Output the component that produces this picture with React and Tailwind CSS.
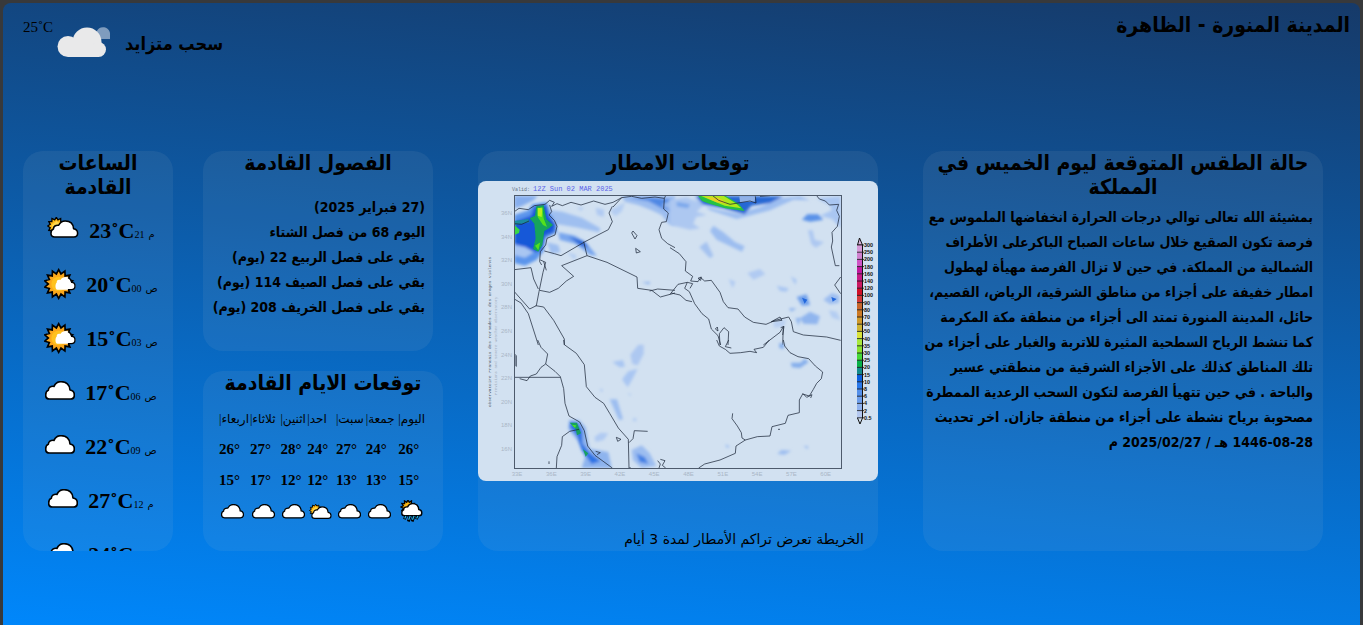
import React from "react";

const CLOUD =
  "M14 54H76C85 54 88 48 88 42C88 34 83 28 75 27C74 12 64 2 48 2C38 2 31 7 27 16C17 15 10 19 10 28C4 30 2 36 2 42C2 50 6 54 14 54Z";

function burst(cx, cy, outer, inner, spikes) {
  const pts = [];
  for (let i = 0; i < spikes * 2; i++) {
    const r = i % 2 ? inner : outer;
    const a = (Math.PI * i) / spikes - Math.PI / 2;
    pts.push(`${(cx + r * Math.cos(a)).toFixed(1)},${(cy + r * Math.sin(a)).toFixed(1)}`);
  }
  return pts.join(" ");
}

function Cloud({ className }) {
  return (
    <svg viewBox="0 0 90 57" className={className} aria-hidden="true">
      <path d={CLOUD} fill="#fff" stroke="#000" strokeWidth="5" strokeLinejoin="round" />
    </svg>
  );
}

function CloudSun({ className }) {
  return (
    <svg viewBox="0 0 96 66" className={className} aria-hidden="true">
      <polygon points={burst(28, 27, 26, 19, 12)} fill="#fdb813" stroke="#000" strokeWidth="4" />
      <path d="M14 24L28 12L42 20L20 44Z" fill="#ffd84a" />
      <path d={CLOUD} transform="translate(10 10) scale(.93)" fill="#fff" stroke="#000" strokeWidth="5" strokeLinejoin="round" />
    </svg>
  );
}

function Sunny({ className }) {
  return (
    <svg viewBox="0 0 96 92" className={className} aria-hidden="true">
      <polygon points={burst(44, 46, 43, 31, 14)} fill="#fba81c" stroke="#000" strokeWidth="5" />
      <circle cx="44" cy="46" r="22" fill="#ffc21f" />
      <path
        d="M40 63H82C91 63 94 58 94 52C94 45 89 41 82 41C81 31 75 25 66 25C58 25 52 28 49 34C41 32 38 36 38 42C33 45 33 63 40 63Z"
        fill="#fff"
      />
      <path d="M72 27C80 30 82 37 83 41C90 41 93 46 93 52C93 58 90 63 82 63H72" fill="none" stroke="#000" strokeWidth="4" />
    </svg>
  );
}

function Rain({ className }) {
  return (
    <svg viewBox="0 0 72 70" className={className} aria-hidden="true">
      <polygon points={burst(25, 22, 22, 15, 12)} fill="#fdb813" stroke="#000" strokeWidth="4" />
      <path d={CLOUD} transform="translate(4 10) scale(.73)" fill="#fff" stroke="#000" strokeWidth="6" />
      <g stroke="#000" strokeWidth="9">
        <path d="M18 50L14 60M32 50L26 67M44 50L38 67M56 50L51 60" />
      </g>
      <g stroke="#24b6e8" strokeWidth="4">
        <path d="M18 50L15 58M32 50L27 62M44 50L39 62M56 50L52 58" />
      </g>
    </svg>
  );
}

const ICONS = { cloud: Cloud, cloudSun: CloudSun, sunny: Sunny, rain: Rain };

const hours = [
  ["cloudSun", 23, "21", "م"],
  ["sunny", 20, "00", "ص"],
  ["sunny", 15, "03", "ص"],
  ["cloud", 17, "06", "ص"],
  ["cloud", 22, "09", "ص"],
  ["cloud", 27, "12", "م"],
  ["cloud", 24, "15", "م"],
];

const days = [
  ["اليوم", 26, 15, "rain"],
  ["جمعة", 24, 13, "cloud"],
  ["سبت", 27, 13, "cloud"],
  ["احد", 24, 12, "cloudSun"],
  ["اثنين", 28, 12, "cloud"],
  ["ثلاثاء", 27, 17, "cloud"],
  ["اربعاء", 26, 15, "cloud"],
];

const seasons = [
  "(27 فبراير 2025)",
  "اليوم 68 من فصل الشتاء",
  "بقي على فصل الربيع 22 (يوم)",
  "بقي على فصل الصيف 114 (يوم)",
  "بقي على فصل الخريف 208 (يوم)",
];

const report = [
  "بمشيئة الله تعالى توالي درجات الحرارة انخفاضها الملموس مع",
  "فرصة تكون الصقيع خلال ساعات الصباح الباكرعلى الأطراف",
  "الشمالية من المملكة. في حين لا تزال الفرصة مهيأة لهطول",
  "امطار خفيفة على أجزاء من مناطق الشرقية، الرياض، القصيم،",
  "حائل، المدينة المنورة تمتد الى أجزاء من منطقة مكة المكرمة",
  "كما تنشط الرياح السطحية المثيرة للاتربة والغبار على أجزاء من",
  "تلك المناطق كذلك على الأجزاء الشرقية من منطقتي عسير",
  "والباحة . في حين تتهيأ الفرصة لتكون السحب الرعدية الممطرة",
  "مصحوبة برياح نشطة على أجزاء من منطقة جازان. اخر تحديث",
];

const scale = [
  ["300", "#d79ad8"], ["250", "#d081cf"], ["200", "#cf55c6"], ["180", "#c2189f"],
  ["160", "#c71c86"], ["140", "#cb1a62"], ["120", "#d01028"], ["100", "#d23a3a"],
  ["90", "#c8662c"], ["80", "#cc7a26"], ["70", "#cf9a2c"], ["60", "#cdb435"],
  ["50", "#d9e23a"], ["40", "#a8e83c"], ["35", "#88e030"], ["30", "#45d838"],
  ["25", "#08b048"], ["20", "#128a8c"], ["15", "#0a5fe0"], ["10", "#2a78ea"],
  ["8", "#5590ea"], ["6", "#6f9fec"], ["4", "#90b2ee"], ["2", "#b4c8f0"], ["0.5", ""],
];

function RainMap() {
  return (
    <svg viewBox="0 0 400 300" className="block w-full rounded-lg bg-[#d2e1f1]" role="img" aria-label="توقعات الامطار">
      <defs>
        <filter id="soft" x="-20%" y="-20%" width="140%" height="140%">
          <feGaussianBlur stdDeviation="4" />
        </filter>
        <filter id="soft2" x="-20%" y="-20%" width="140%" height="140%">
          <feGaussianBlur stdDeviation="2" />
        </filter>
        <clipPath id="frame">
          <rect x="37" y="15" width="326" height="272" />
        </clipPath>
      </defs>

      <g clipPath="url(#frame)">
        {/* north west */}
        <svg x="-3" y="-36" width="200" height="200" viewBox="0 0 600 600" overflow="visible">
          <g filter="url(#soft)">
            <path d="M118 152H188L176 166L140 184L118 190Z" fill="#86aeee" />
            <path d="M118 210L160 196L172 178L215 172L226 205L244 228L246 262L212 280L206 318L184 345L150 362L118 354Z" fill="#5b95ec" />
            <path d="M118 230L168 212L178 186L214 180L222 216L242 236L236 262L210 272L200 312L184 322L160 312L118 296Z" fill="#1658d8" />
            <path d="M118 300L150 306L176 322L150 338L118 330Z" fill="#a9c6f2" />
            <path d="M226 196L262 200L320 218L376 250L372 262L310 248L240 236Z" fill="#9fbff0" />
            <path d="M250 262L300 272L332 292L366 332L346 330L300 296L254 284Z" fill="#78a6ee" />
            <path d="M280 274L324 288L342 308L318 302Z" fill="#2064d8" />
            <path d="M216 292L250 300L256 322L228 326Z" fill="#9fbff0" />
            <path d="M276 322L304 330L300 346Z" fill="#b4cdf2" />
            <path d="M362 188L388 194L386 216L366 210Z" fill="#b0caf2" />
            <path d="M405 196L450 172L440 200L420 214Z" fill="#b4cdf2" />
            <path d="M440 152H600V240L580 236L560 210L530 196L490 180L450 170Z" fill="#9cbdf0" />
            <path d="M460 158L520 168L560 190L596 200L560 180L590 164L540 158Z" fill="#4f88e4" />
            <path d="M500 412L526 412L522 418Z" fill="#7fa8ec" />
            <path d="M306 186L328 188L316 198Z" fill="#b4cdf2" />
          </g>
          <g filter="url(#soft2)">
            <path d="M184 184L206 180L214 222L234 240L222 250L208 258L202 300L190 320L174 312L182 280L178 236L164 220L180 212Z" fill="#12a45c" />
            <path d="M188 190L202 186L206 220L216 246L204 240L188 216Z" fill="#54e01e" />
            <path d="M188 188L202 190L200 216L188 212Z" fill="#b8f01c" />
            <path d="M180 302L196 292L190 316Z" fill="#54e01e" />
            <path d="M118 240L134 254L132 264L118 270Z" fill="#38d844" />
            <path d="M118 228L160 222L164 232L118 240Z" fill="#1c8ca0" />
          </g>
          <g fill="none" stroke="#1b2638" strokeWidth="2.2" strokeLinejoin="round">
            <path d="M118 200L132 190L160 194L178 182L210 178L224 166L238 172L230 184L246 176L262 182L288 172L318 180L356 168L390 178L414 172L440 158L470 154L500 160L540 156L568 160L572 152" />
            <path d="M224 180L230 200L222 210L238 226L246 244L240 270L216 280L212 300L196 320L194 350L200 360" />
            <path d="M118 236L140 238L162 228" />
            <path d="M196 345L212 352L204 382L192 440L184 482L164 492L118 440" />
            <path d="M118 374L168 368L176 402L190 432" />
            <path d="M118 462L138 474L160 506L190 600" />
            <path d="M182 482L206 486L236 526L268 582V600" />
            <path d="M412 184L402 204L412 230L400 254L330 290L258 332L238 326L208 318" />
            <path d="M326 290L336 332L260 362L296 394L274 408L250 430L224 442L194 436" />
            <path d="M336 332L396 352L486 396L488 430L530 436L556 456L600 444" />
            <path d="M440 158L414 186M568 160L566 192L580 204L574 230L560 232L552 254L560 280L578 296L600 308" />
            <path d="M524 438L548 432L600 436M470 264L474 258L486 272L480 282ZM482 310L496 320L484 324ZM206 350L214 376" />
          </g>
        </svg>

        {/* north east */}
        <svg x="192" y="-36" width="220" height="200" viewBox="0 0 660 600" overflow="visible">
          <g filter="url(#soft)">
            <path d="M0 165L50 156L100 180L80 200L110 210L78 216L70 236L90 250L60 254L0 240Z" fill="#adc8f1" />
            <path d="M20 170L60 178L54 190L20 184Z" fill="#7aa7ec" />
            <path d="M66 152L90 180L150 196L216 208L236 196L270 186L330 160L390 154L420 166L370 164L300 196L246 210L200 222L120 196Z" fill="#9cbdf0" />
            <path d="M76 152L98 178L160 190L224 208L244 182L300 174L340 154Z" fill="#2667d4" />
            <path d="M396 224L412 208L444 208L460 224L420 230Z" fill="#5a92e8" />
            <path d="M440 160L512 154V250L486 222L450 212L486 196L478 180Z" fill="#a9c6f2" />
            <path d="M130 242L160 262L196 292L224 304L216 320L178 302L140 284L120 258Z" fill="#9cbdf0" />
            <path d="M88 306L110 290L130 332L120 340Z" fill="#a4c2f0" />
            <path d="M232 384L270 372L286 388L250 404Z" fill="#b0caf2" />
            <path d="M176 402L196 410L188 430Z" fill="#b0caf2" />
            <path d="M414 256L428 256L434 284L462 292L438 308L424 298Z" fill="#adc8f1" />
            <path d="M320 422L356 430L350 440L330 438ZM362 394L380 404L376 420Z" fill="#a9c6f2" />
            <path d="M380 456L410 448L420 480L396 482Z" fill="#6fa0ec" />
            <path d="M460 464L486 444L508 452L506 474L480 478Z" fill="#9cbdf0" />
            <path d="M390 520L420 500L450 514L442 538L400 536ZM376 520L392 518L386 542ZM356 490L380 490L364 500Z" fill="#90b5ee" />
            <path d="M476 496L500 500L512 526L486 518Z" fill="#b4cdf2" />
            <path d="M310 530L350 524L340 545L312 548Z" fill="#b9d0f2" />
          </g>
          <g filter="url(#soft2)">
            <path d="M84 152H166L206 176L224 198L166 190L118 176L96 168Z" fill="#25c044" />
            <path d="M92 152H160L196 174L214 190L164 182L120 164Z" fill="#aee81c" />
            <path d="M104 156L146 158L174 176L140 172Z" fill="#e6ce28" />
            <path d="M396 458L412 464L404 476ZM484 456L500 462L488 470Z" fill="#2467dc" />
            <path d="M208 154H256L254 170L210 172Z" fill="#8fb0e6" />
          </g>
          <g fill="none" stroke="#1b2638" strokeWidth="2.2" strokeLinejoin="round">
            <path d="M128 152L146 166L180 178L240 168L258 174L256 154" />
            <path d="M270 154L300 152M440 152L448 162L466 168L478 180L506 178L500 196L508 214L502 244L486 262L488 288L484 306L496 362L508 362" />
            <path d="M512 396L494 420L512 446" />
            <path d="M0 308L28 326L48 350L46 378L68 394L62 408L84 410L92 398L104 408L124 406L150 442L160 470L174 488L204 492L224 516L250 532L288 538L316 526L356 516L364 530L370 560L400 570L470 576L512 586" />
            <path d="M0 448L24 418L52 412L44 430L58 440L74 476L96 506L116 522L124 552L144 572L152 600M52 412L68 416L60 430M30 450L48 466L66 470M4 444L30 450" />
            <path d="M150 600L148 566L162 548L176 560L174 600M136 552L142 546L144 558ZM84 400L94 396L92 406ZM304 530L330 516L336 526ZM338 600L340 545L330 562L280 600M332 548L342 544L338 570" />
          </g>
        </svg>

        {/* south west */}
        <svg x="-3" y="159" width="200" height="215" viewBox="0 0 600 645" overflow="visible">
          <g filter="url(#soft)">
            <path d="M466 44L490 14L506 14L506 42L488 76L472 72Z" fill="#adc8f1" />
            <path d="M412 66L444 60L450 80L434 82ZM444 114L460 94L488 86L474 114L458 142L442 120Z" fill="#a9c6f2" />
            <path d="M374 146L384 150L380 156ZM404 178L426 178L444 238L432 240Z" fill="#9cbdf0" />
            <path d="M358 292L376 278L400 280L386 300L362 306Z" fill="#b0caf2" />
            <path d="M282 240L312 240L332 262L338 300L344 326L400 336L410 384H320L330 352L306 300L280 268Z" fill="#8eb4ee" />
            <path d="M286 246L310 250L322 272L322 310L344 338L376 364L350 372L320 330L306 288L284 262Z" fill="#2c72e4" />
            <path d="M470 330L500 316L524 340L544 378L500 384L474 360Z" fill="#9cbdf0" />
            <path d="M484 340L510 352L520 372L494 366Z" fill="#4380e4" />
            <path d="M474 234H484V244H474ZM458 160L470 162L464 168Z" fill="#b4cdf2" />
          </g>
          <g filter="url(#soft2)">
            <path d="M284 248L306 248L318 280L306 286L302 266ZM324 328L340 340L332 350Z" fill="#14a060" />
            <path d="M290 254L304 256L300 264Z" fill="#4be02a" />
          </g>
          <g fill="none" stroke="#1b2638" strokeWidth="2.2" strokeLinejoin="round">
            <path d="M188 0L198 22L218 42L212 72L240 94L256 110L266 146L270 190L282 228L314 246L328 272L338 318L360 346L412 384" />
            <path d="M118 112H256M134 116L156 122L166 108L184 102L198 82L212 72" />
            <path d="M266 0L268 14L304 40L328 74L334 140L360 172L386 190L404 220L430 264L460 298L462 384L468 384" />
            <path d="M244 384L246 350L260 316L262 290L284 274L312 268M462 308L474 296L478 272L518 274" />
            <path d="M424 292L438 298L428 304ZM362 334L376 338L366 344M222 364V372M548 362L556 372L552 384M556 358L570 362L562 376L572 384M120 42V78M124 46V80" />
          </g>
        </svg>

        {/* south east */}
        <svg x="192" y="159" width="220" height="215" viewBox="0 0 660 645" overflow="visible">
          <g filter="url(#soft)">
            <path d="M328 8L344 12L340 28L328 24ZM362 68L392 68L404 56L416 66L390 84L366 82Z" fill="#84aeec" />
            <path d="M322 342L334 330L364 332L344 344ZM166 312L180 320L170 324ZM400 318H414V328Z" fill="#9cbdf0" />
          </g>
          <g fill="none" stroke="#1b2638" strokeWidth="2.2" strokeLinejoin="round">
            <path d="M340 0L344 18L360 38L384 50L416 56L436 78L458 96L454 116L440 130L430 148L418 168L398 162L388 180L388 218L354 226L346 250L306 260L300 288L262 290L226 300L198 318L196 340L150 360L104 372L86 384" />
            <path d="M188 220L186 236L202 258L214 278L216 294L226 300M140 0L148 18L166 28L180 40L212 38M176 0L166 20L184 24M212 38L240 34L260 38L252 28L280 22L298 0M398 160L410 172L426 164L422 174M324 268H330" />
          </g>
        </svg>
      </g>

      <rect x="36.5" y="14.5" width="327" height="273" fill="none" stroke="#4d5a6c" />

      <g fontFamily="Liberation Mono, monospace">
        <text x="34" y="10" fontSize="5" fill="#6c7787">Valid:</text>
        <text x="55" y="10" fontSize="7" fill="#5a63e8">12Z Sun 02 MAR 2025</text>
        <text transform="translate(13 226) rotate(-90)" fontSize="4.4" fill="#4a5566">
          Observatoire Francais des Tornades et des Orages Violents
        </text>
        <text transform="translate(19 214) rotate(-90)" fontSize="4" fill="#a2afc0">
          Previsions and Severe Weather Observatory
        </text>
      </g>
      <g fontFamily="Liberation Sans, sans-serif" fontSize="6" fill="#a9b6c6">
        {["36N", "34N", "32N", "30N", "28N", "26N", "24N", "22N", "20N", "18N", "16N"].map((t, i) => (
          <text key={t} x="34" y={34 + i * 23.6} textAnchor="end">{t}</text>
        ))}
        {["33E", "36E", "39E", "42E", "45E", "48E", "51E", "54E", "57E", "60E"].map((t, i) => (
          <text key={t} x={39 + i * 34.3} y="295" textAnchor="middle">{t}</text>
        ))}
      </g>
      <path d="M379.500 64L381.500 57L384.500 64Z" fill="#d9b5dc" stroke="#111" />
      {scale.map(([label, color], i) => (
        <g key={label}>
          {color && <rect x="379" y={64 + i * 7.2} width="6" height="7.2" fill={color} />}
          <path d={`M379 ${64 + i * 7.2}H386`} stroke="#111" strokeWidth=".8" />
          <text x="386" y={66 + i * 7.2} fontSize="5.4" fontWeight="700" fontFamily="Liberation Sans, sans-serif" fill="#111">
            {label}
          </text>
        </g>
      ))}
      <path d="M384.500 64V237M379.500 237L382 243L384.500 237" fill="none" stroke="#111" />
    </svg>
  );
}

function Card({ title, className, children }) {
  return (
    <section className={`flex flex-col overflow-hidden rounded-[20px] bg-[#c8c8c8]/8 ${className}`}>
      <h2 className="text-center font-['DejaVu_Sans_Condensed','DejaVu_Sans',sans-serif] text-[21px] leading-6 font-bold" dir="rtl">
        {title}
      </h2>
      {children}
    </section>
  );
}

export default function App() {
  return (
    <div className="min-h-screen bg-[#38393b] px-[3px] pt-[3px] font-['DejaVu_Sans',sans-serif] text-black">
      <div className="min-h-[622px] rounded-t-lg bg-linear-[5deg,#0087fb,#163a69] pr-[37px] pl-5">
        <header className="-mr-[27px] flex h-[148px] items-start justify-between pt-2.5 font-['DejaVu_Sans_Condensed','DejaVu_Sans',sans-serif]">
          <div className="flex items-start">
            <span className="pt-1 font-['Liberation_Serif',serif] text-[15px] leading-5">25˚C</span>
            <svg viewBox="0 0 54 33" className="mt-3 ml-1 h-[33px] w-[54px]" aria-hidden="true">
              <path d="M41 14A7 7 0 1 1 53 10V14Z" fill="#7f9cbe" />
              <g fill="#e9e9ea">
                <circle cx="11" cy="21.500" r="10.500" />
                <circle cx="30" cy="17" r="14.500" />
                <circle cx="41.500" cy="24.500" r="7.500" />
                <rect x="11" y="20" width="31" height="12" />
              </g>
            </svg>
            <span className="ml-3.5 pt-[19px] text-lg leading-6 font-bold" dir="rtl">سحب متزايد</span>
          </div>
          <h1 className="text-[21px] leading-6 font-bold" dir="rtl">المدينة المنورة - الظاهرة</h1>
        </header>

        <main className="flex items-start">
          <Card
            title={<>الساعات<br />القادمة</>}
            className="h-[400px] min-w-0 flex-[150]"
          >
            <ul className="pt-1">
              {hours.map(([icon, temp, hour, half]) => {
                const Icon = ICONS[icon];
                return (
                  <li key={hour} className="flex h-[54px] shrink-0 items-center justify-center gap-2.5 pl-1.5 whitespace-nowrap">
                    <Icon className={icon === "sunny" ? "h-8 w-8" : icon === "cloud" ? "mb-1 w-[30px]" : "mb-1 w-8"} />
                    <span className="flex items-baseline font-['Liberation_Serif','DejaVu_Sans',serif]">
                      <span className="text-[22px] font-bold">{temp}˚C</span>
                      <span className="text-[10px]">{hour}</span>
                      <span className="ml-1 text-[10px]">{half}</span>
                    </span>
                  </li>
                );
              })}
            </ul>
          </Card>

          <div className="ml-[30px] flex min-w-0 flex-[240] flex-col gap-5">
            <Card title="الفصول القادمة" className="mr-2.5 h-[200px]">
              <ul
                className="pt-5 pr-2 font-['DejaVu_Sans_Condensed','DejaVu_Sans',sans-serif] text-sm leading-[25px] font-bold whitespace-nowrap"
                dir="rtl"
              >
                {seasons.map((s) => <li key={s}>{s}</li>)}
              </ul>
            </Card>
            <Card title="توقعات الايام القادمة" className="h-[180px]">
              <table className="mt-2 mr-[18px] ml-4 table-fixed border-collapse font-['Liberation_Serif','DejaVu_Sans',serif]" dir="rtl">
                <colgroup>
                  <col className="w-[25px]" />
                  <col className="w-[33px]" />
                  <col className="w-[30px]" />
                  <col className="w-[29px]" />
                  <col className="w-[27px]" />
                  <col className="w-[31px]" />
                  <col className="w-[31px]" />
                </colgroup>
                <thead>
                  <tr className="h-[31px] text-xs whitespace-nowrap">
                    {days.map(([d]) => <th key={d} className="p-0 text-left font-normal">{d}|</th>)}
                  </tr>
                </thead>
                <tbody className="text-[15px] font-bold">
                  <tr className="h-[31px]">
                    {days.map(([d, hi]) => <td key={d} className="p-0 text-left" dir="ltr">{hi}°</td>)}
                  </tr>
                  <tr className="h-[31px]">
                    {days.map(([d, , lo]) => <td key={d} className="p-0 text-left" dir="ltr">{lo}°</td>)}
                  </tr>
                  <tr className="h-[31px]">
                    {days.map(([d, , , icon]) => {
                      const Icon = ICONS[icon];
                      return (
                        <td key={d} className="p-0 pl-0.5" dir="ltr">
                          <Icon className="w-[23px]" />
                        </td>
                      );
                    })}
                  </tr>
                </tbody>
              </table>
            </Card>
          </div>

          <Card title="توقعات الامطار" className="ml-[35px] h-[400px] min-w-0 flex-[400] gap-1.5">
            <RainMap />
            <p className="mt-auto pr-3.5 text-sm leading-6" dir="rtl">الخريطة تعرض تراكم الأمطار لمدة 3 أيام</p>
          </Card>

          <Card
            title={<>حالة الطقس المتوقعة ليوم الخميس في<br />المملكة</>}
            className="ml-[45px] h-[400px] min-w-0 flex-[400]"
          >
            <p
              className="pt-1.5 pr-2.5 font-['DejaVu_Sans_Condensed','DejaVu_Sans',sans-serif] text-sm leading-[25px] font-bold whitespace-nowrap"
              dir="rtl"
            >
              {report.map((line) => <React.Fragment key={line}>{line}<br /></React.Fragment>)}
              <span dir="ltr">1446-08-28</span> هـ / <span dir="ltr">2025/02/27</span> م
            </p>
          </Card>
        </main>
      </div>
    </div>
  );
}
